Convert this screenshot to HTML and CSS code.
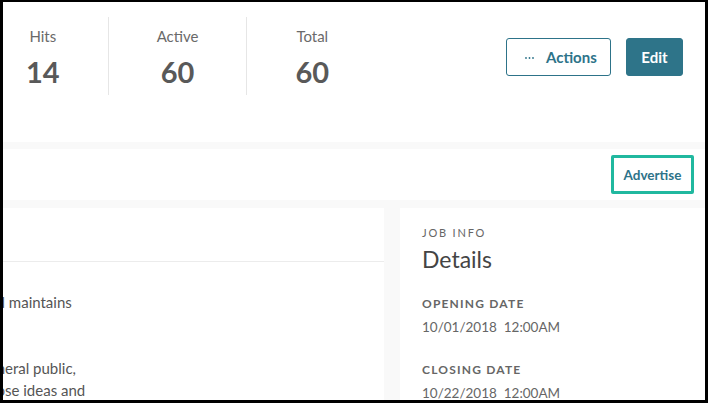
FILE: index.html
```html
<!DOCTYPE html>
<html lang="en">
<head>
<meta charset="utf-8">
<title>Job</title>
<link rel="stylesheet" href="styles.css">
</head>
<body>
<div class="screen">
  <header class="header">
    <div class="stats">
      <div class="stat"><div class="stat-label">Hits</div><div class="stat-value">14</div></div>
      <div class="stat"><div class="stat-label">Active</div><div class="stat-value">60</div></div>
      <div class="stat"><div class="stat-label">Total</div><div class="stat-value">60</div></div>
    </div>
    <div class="actions">
      <button class="btn btn-outline" type="button">
        <svg class="dots" width="9" height="2" viewBox="0 0 9 2" aria-hidden="true"><circle cx="1" cy="1" r="0.9"/><circle cx="4.5" cy="1" r="0.9"/><circle cx="8" cy="1" r="0.9"/></svg>
        <span>Actions</span>
      </button>
      <button class="btn btn-primary" type="button">Edit</button>
    </div>
  </header>

  <div class="toolbar">
    <button class="btn-advertise" type="button">Advertise</button>
  </div>

  <main class="main">
    <section class="card card-desc">
      <div class="card-head"></div>
      <div class="card-body">
        <p class="para"><span class="cut">The department develops and</span> maintains</p>
        <p class="para"><span class="cut">and communicates with the gen</span>eral public,<br><span class="cut">community members who propo</span>se ideas and</p>
      </div>
    </section>
    <aside class="card card-info">
      <div class="info-kicker">Job Info</div>
      <h2 class="info-title">Details</h2>
      <div class="field">
        <div class="field-label">Opening Date</div>
        <div class="field-value">10/01/2018&nbsp; 12:00AM</div>
      </div>
      <div class="field">
        <div class="field-label">Closing Date</div>
        <div class="field-value">10/22/2018&nbsp; 12:00AM</div>
      </div>
    </aside>
  </main>
</div>
</body>
</html>
```

FILE: styles.css
```css
* { box-sizing: border-box; }

html, body {
  margin: 0;
  padding: 0;
  background: #000;
}

body {
  font-family: "Lato", "Open Sans", sans-serif;
  color: #555;
}

.screen {
  width: 702px;
  height: 398px;
  margin: 2px 3px 0 3px;
  overflow: hidden;
  background: #f9f9f9;
}

/* Header with stats and action buttons */
.header {
  height: 140px;
  background: #fff;
  display: flex;
  align-items: flex-start;
  justify-content: space-between;
  padding: 15px 22px 0 0;
}

.stats {
  display: flex;
  margin-left: -25px;
}

.stat {
  height: 78px;
  padding: 10px 48px 0;
  text-align: center;
}

.stat + .stat {
  border-left: 1px solid #e6e6e6;
}

.stat-label {
  font-size: 15px;
  line-height: 18px;
  color: #6a6a6a;
}

.stat-value {
  margin-top: 10px;
  font-size: 29px;
  line-height: 34px;
  font-weight: 700;
  color: #595959;
}

.actions {
  display: flex;
  gap: 15px;
  margin-top: 21px;
}

.btn {
  height: 38px;
  border-radius: 3px;
  font-family: inherit;
  font-size: 15px;
  font-weight: 700;
  display: flex;
  align-items: center;
  cursor: pointer;
}

.btn-outline {
  width: 105px;
  padding: 0 0 0 18px;
  gap: 12px;
  background: #fff;
  border: 1px solid #2d7389;
  color: #2d7389;
}

.dots {
  fill: #2d7389;
  margin-top: 1px;
}

.btn-primary {
  width: 57px;
  justify-content: center;
  padding: 0;
  background: #2e7489;
  border: 1px solid #2e7489;
  color: #fff;
}

/* Toolbar */
.toolbar {
  height: 51px;
  margin-top: 7px;
  background: #fff;
  display: flex;
  align-items: center;
  justify-content: flex-end;
  padding-right: 11px;
}

.btn-advertise {
  width: 83px;
  height: 39px;
  padding: 0;
  background: #fff;
  border: 3px solid #20b89f;
  border-radius: 2px;
  font-family: inherit;
  font-size: 13.5px;
  font-weight: 700;
  color: #2d7389;
  cursor: pointer;
}

/* Main content */
.main {
  display: flex;
  gap: 16px;
  margin-top: 8px;
  margin-left: -300px;
  height: 300px;
}

.card {
  background: #fff;
}

.card-desc {
  width: 681px;
  flex: none;
}

.card-head {
  height: 54px;
  border-bottom: 1px solid #ececec;
}

.card-body {
  padding: 29px 24px 0;
}

.para {
  margin: 0;
  font-size: 15px;
  line-height: 22.5px;
  color: #555;
  white-space: nowrap;
}

.para + .para {
  margin-top: 43px;
}

.cut {
  display: inline-block;
  width: 278px;
  text-align: right;
}

.card-info {
  flex: 1;
  padding: 18px 22px 0;
}

.info-kicker {
  font-size: 11px;
  line-height: 14px;
  letter-spacing: 1.8px;
  text-transform: uppercase;
  color: #666;
}

.info-title {
  margin: 5px 0 0;
  font-size: 23px;
  line-height: 28px;
  font-weight: 400;
  color: #444;
}

.field {
  margin-top: 23px;
}

.field + .field {
  margin-top: 25px;
}

.field-label {
  font-size: 12px;
  line-height: 16px;
  font-weight: 700;
  letter-spacing: 1.2px;
  text-transform: uppercase;
  color: #666;
}

.field-value {
  margin-top: 5px;
  font-size: 13.5px;
  line-height: 20px;
  color: #666;
}
```
